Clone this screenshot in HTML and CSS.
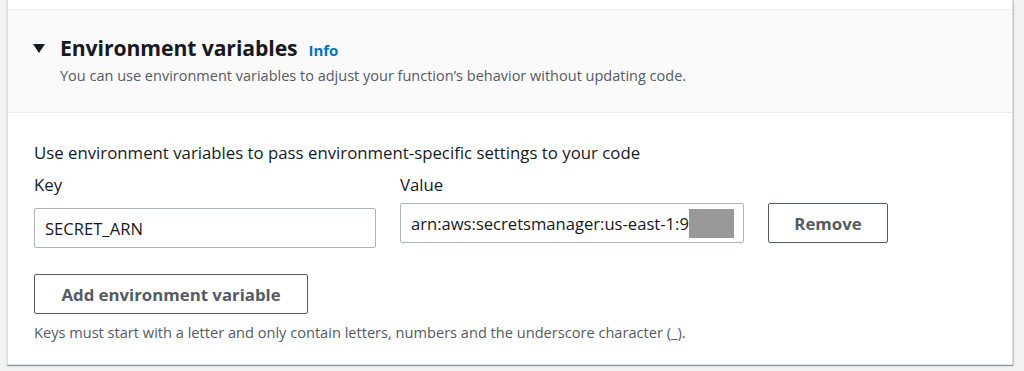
FILE: index.html
```html
<!DOCTYPE html>
<html lang="en">
<head>
    <meta charset="UTF-8">
    <title>Environment variables</title>
    <link rel="stylesheet" href="styles.css">
</head>
<body>
    <div class="card">
        <div class="card-top"></div>
        <div class="card-header">
            <div class="title-row">
                <span class="caret"></span>
                <h2>Environment variables</h2>
                <a class="info" href="#">Info</a>
            </div>
            <p class="description">You can use environment variables to adjust your function’s behavior without updating code.</p>
        </div>
        <div class="card-body">
            <p class="lead">Use environment variables to pass environment-specific settings to your code</p>
            <div class="row">
                <div class="field field-key">
                    <label>Key</label>
                    <div class="input input-key">SECRET_ARN</div>
                </div>
                <div class="field field-value">
                    <label>Value</label>
                    <div class="input input-value">arn:aws:secretsmanager:us-east-1:9<span class="redacted"></span></div>
                </div>
                <button class="btn btn-remove">Remove</button>
            </div>
            <button class="btn btn-add">Add environment variable</button>
            <p class="hint">Keys must start with a letter and only contain letters, numbers and the underscore character (_).</p>
        </div>
    </div>
</body>
</html>
```

FILE: styles.css
```css
html, body {
    margin: 0;
    padding: 0;
    height: 100%;
    background: #f2f3f3;
    font-family: 'Open Sans', sans-serif;
    color: #16191f;
    overflow: hidden;
}

.card {
    margin-left: 7px;
    width: 1004px;
    background: #fff;
    border: 1px solid #dcdfe0;
    border-top: none;
    box-shadow: 0 1px 1px 0 rgba(0, 28, 36, 0.3), 1px 1px 1px 0 rgba(0, 28, 36, 0.15);
}

.card-top {
    height: 9px;
    border-bottom: 1px solid #eaeded;
}

.card-header {
    background: #fafafa;
    border-bottom: 1px solid #eaeded;
    padding: 24px 25px 0 25px;
    height: 78px;
}

.title-row {
    display: flex;
    align-items: center;
    height: 28px;
}

.caret {
    width: 0;
    height: 0;
    border-left: 6px solid transparent;
    border-right: 6px solid transparent;
    border-top: 9px solid #16191f;
    margin-right: 15px;
    margin-top: 1px;
}

h2 {
    margin: 0;
    font-size: 21.2px;
    line-height: 28px;
    font-weight: 700;
    letter-spacing: -0.1px;
}

.info {
    margin-left: 11px;
    margin-top: 3px;
    font-size: 15px;
    font-weight: 700;
    color: #0073bb;
    text-decoration: none;
}

.description {
    margin: 4px 0 0 27px;
    font-size: 14.5px;
    line-height: 20px;
    color: #545b64;
}

.card-body {
    padding: 0 26px 0 26px;
    height: 251px;
}

.lead {
    margin: 0;
    padding-top: 30px;
    font-size: 16.8px;
    line-height: 20px;
}

.row {
    display: flex;
    align-items: flex-start;
    margin-top: 12px;
}

.field label {
    display: block;
    font-size: 16.8px;
    line-height: 20px;
}

.field-key {
    width: 342px;
}

.field-value {
    width: 344px;
    margin-left: 24px;
}

.input {
    box-sizing: border-box;
    border: 1px solid #aab7b8;
    border-radius: 2px;
    background: #fff;
    font-size: 16.6px;
    display: flex;
    align-items: center;
    padding: 0 10px;
    white-space: nowrap;
    overflow: hidden;
}

.input-key {
    height: 40px;
    margin-top: 13px;
}

.input-value {
    height: 40px;
    margin-top: 8px;
}

.redacted {
    display: inline-block;
    width: 45px;
    height: 29px;
    background: #999;
    flex: none;
}

.btn {
    box-sizing: border-box;
    background: #fff;
    border: 1px solid #545b64;
    border-radius: 2px;
    color: #545b64;
    font-family: 'Open Sans', sans-serif;
    font-weight: 700;
    font-size: 16.8px;
    height: 40px;
    padding: 0;
}

.btn-remove {
    width: 120px;
    margin-left: 24px;
    margin-top: 28px;
}

.btn-add {
    display: block;
    width: 274px;
    margin-top: 26px;
}

.hint {
    margin: 8px 0 0 0;
    font-size: 14.6px;
    line-height: 20px;
    color: #545b64;
}
```
